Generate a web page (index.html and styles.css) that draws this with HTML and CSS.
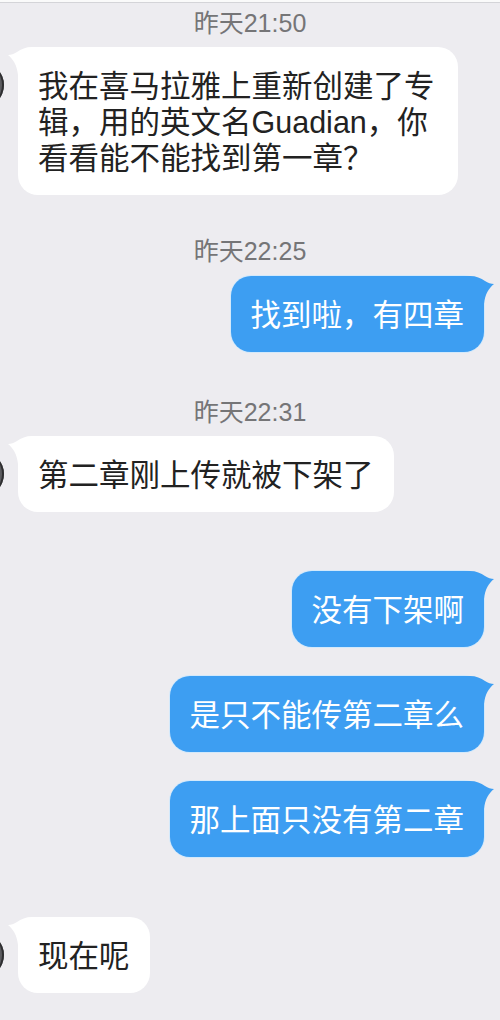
FILE: index.html
```html
<!DOCTYPE html>
<html lang="zh-CN">
<head>
<meta charset="utf-8">
<title>聊天记录</title>
<link rel="stylesheet" href="styles.css">
</head>
<body>
<div class="topbar"></div>
<main class="chat">
  <div class="time t-first">昨天21:50</div>
  <div class="row in after-time">
    <span class="avatar"></span>
    <div class="bubble">我在喜马拉雅上重新创建了专辑，用的英文名Guadian，你看看能不能找到第一章？<svg class="tail" viewBox="0 0 30 30"><path d="M0 0 H6 C12 0 17 2 21 5 C24 7 27 8 30 8 C25 12 21 18 20 28 L0 28 Z"/></svg></div>
  </div>

  <div class="time t-gap">昨天22:25</div>
  <div class="row out after-time t10">
    <div class="bubble">找到啦，有四章<svg class="tail" viewBox="0 0 30 30"><path d="M0 0 H6 C12 0 17 2 21 5 C24 7 27 8 30 8 C25 12 21 18 20 28 L0 28 Z"/></svg></div>
  </div>

  <div class="time t-gap2">昨天22:31</div>
  <div class="row in after-time">
    <span class="avatar"></span>
    <div class="bubble">第二章刚上传就被下架了<svg class="tail" viewBox="0 0 30 30"><path d="M0 0 H6 C12 0 17 2 21 5 C24 7 27 8 30 8 C25 12 21 18 20 28 L0 28 Z"/></svg></div>
  </div>

  <div class="row out switch">
    <div class="bubble">没有下架啊<svg class="tail" viewBox="0 0 30 30"><path d="M0 0 H6 C12 0 17 2 21 5 C24 7 27 8 30 8 C25 12 21 18 20 28 L0 28 Z"/></svg></div>
  </div>
  <div class="row out same">
    <div class="bubble">是只不能传第二章么<svg class="tail" viewBox="0 0 30 30"><path d="M0 0 H6 C12 0 17 2 21 5 C24 7 27 8 30 8 C25 12 21 18 20 28 L0 28 Z"/></svg></div>
  </div>
  <div class="row out same">
    <div class="bubble">那上面只没有第二章<svg class="tail" viewBox="0 0 30 30"><path d="M0 0 H6 C12 0 17 2 21 5 C24 7 27 8 30 8 C25 12 21 18 20 28 L0 28 Z"/></svg></div>
  </div>

  <div class="row in switch2">
    <span class="avatar"></span>
    <div class="bubble">现在呢<svg class="tail" viewBox="0 0 30 30"><path d="M0 0 H6 C12 0 17 2 21 5 C24 7 27 8 30 8 C25 12 21 18 20 28 L0 28 Z"/></svg></div>
  </div>
</main>
</body>
</html>
```

FILE: styles.css
```css
html, body {
  margin: 0;
  padding: 0;
}

body {
  width: 500px;
  height: 1020px;
  overflow: hidden;
  background: #edecf0;
  font-family: "Liberation Sans", "Noto Sans CJK SC", sans-serif;
}

.topbar {
  height: 2px;
  background: #fafafa;
  border-bottom: 1px solid #d4d4d8;
}

.chat {
  display: flex;
  flex-direction: column;
}

.time {
  height: 30px;
  line-height: 30px;
  text-align: center;
  font-size: 25px;
  color: #757577;
}

.t-first { margin-top: 5px; }
.t-gap { margin-top: 41px; }
.t-gap2 { margin-top: 45px; }

.row {
  position: relative;
  display: flex;
}

.row.in {
  justify-content: flex-start;
  padding-left: 18px;
}

.row.out {
  justify-content: flex-end;
  padding-right: 16px;
}

.after-time { margin-top: 9px; }
.t10 { margin-top: 10px; }
.switch { margin-top: 59px; }
.same { margin-top: 29px; }
.switch2 { margin-top: 60px; }

.bubble {
  position: relative;
  box-sizing: border-box;
  max-width: 440px;
  padding: 21px 20px 19px;
  border-radius: 20px;
  font-size: 30.5px;
  line-height: 36px;
}

.in .bubble {
  background: #ffffff;
  color: #222222;
}

.out .bubble {
  background: #3d9ef2;
  color: #ffffff;
  box-shadow: 0 0 0 1px #d3e9fb;
}

.tail {
  position: absolute;
  top: 0;
  width: 30px;
  height: 30px;
}

.out .tail {
  right: -10px;
  fill: #3d9ef2;
}

.in .tail {
  left: -10px;
  fill: #ffffff;
  transform: scaleX(-1);
}

.avatar {
  position: absolute;
  left: -40px;
  top: 16px;
  width: 44px;
  height: 44px;
  border-radius: 50%;
  background: #5c5c60;
  box-shadow: inset -2px 0 0 #2e2e30;
}
```
